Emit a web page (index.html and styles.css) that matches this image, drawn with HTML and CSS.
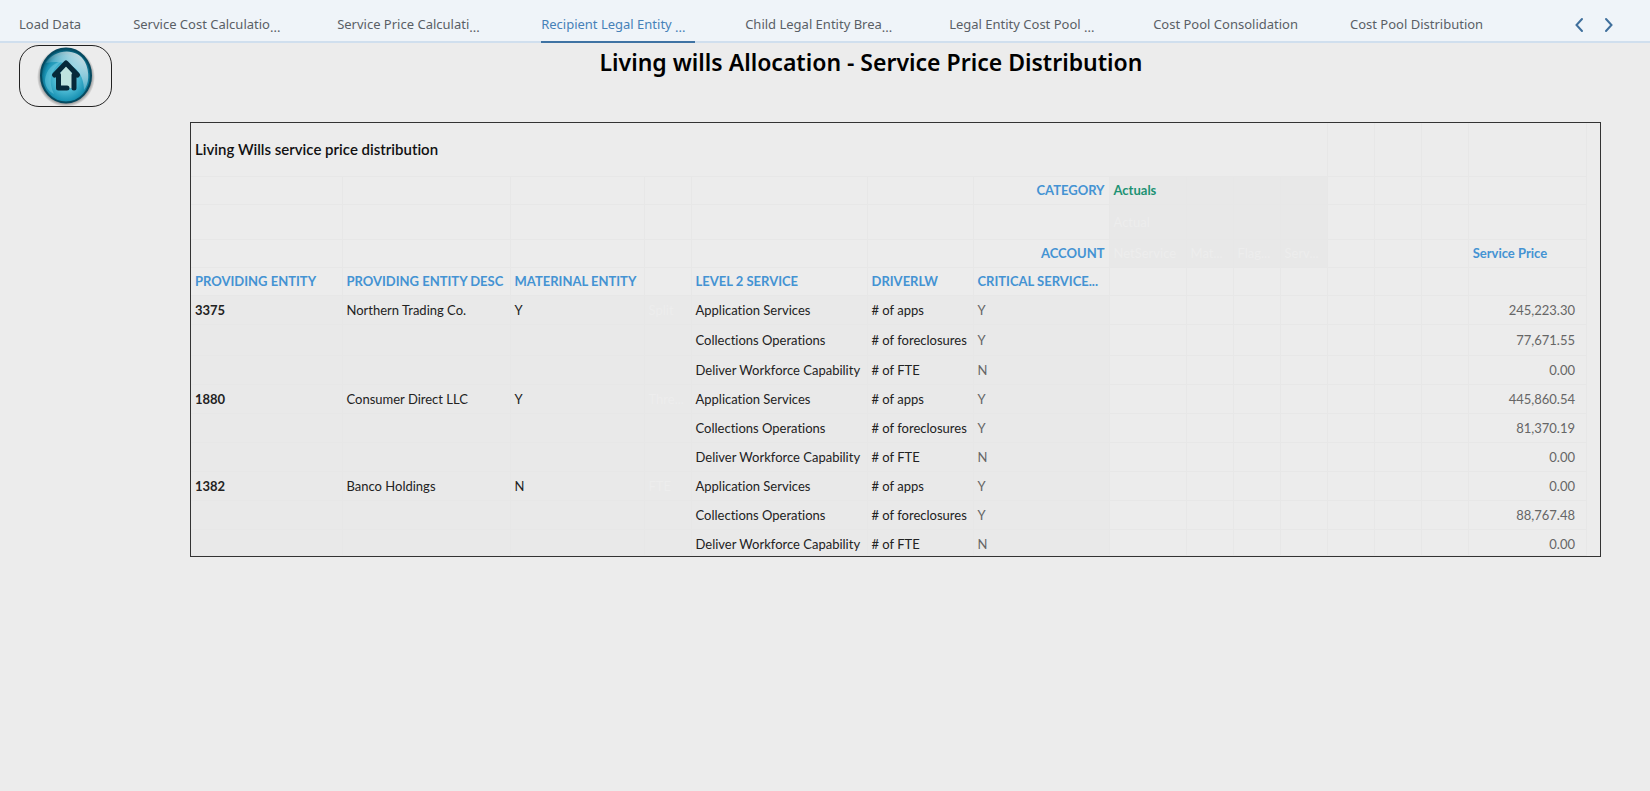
FILE: index.html
```html
<!DOCTYPE html>
<html lang="en">
<head>
<meta charset="utf-8">
<title>Living wills Allocation - Service Price Distribution</title>
<link rel="stylesheet" href="styles.css">
</head>
<body>
<header class="tabbar">
  <nav class="tabs" aria-label="Pages">
    <a class="tab" href="#load">Load Data</a>
    <a class="tab tab-cut" href="#cost">Service Cost Calculatio<span class="dots">...</span></a>
    <a class="tab tab-cut" href="#price">Service Price Calculati<span class="dots">...</span></a>
    <a class="tab tab-cut tab-active" href="#recipient" aria-current="page">Recipient Legal Entity <span class="dots">...</span></a>
    <a class="tab tab-cut" href="#child">Child Legal Entity Brea<span class="dots">...</span></a>
    <a class="tab tab-cut" href="#legal">Legal Entity Cost Pool <span class="dots">...</span></a>
    <a class="tab" href="#consolidation">Cost Pool Consolidation</a>
    <a class="tab" href="#distribution">Cost Pool Distribution</a>
  </nav>
  <div class="pager">
    <button class="arrow" type="button" aria-label="Previous tabs"><svg width="10" height="16" viewBox="0 0 10 16"><path d="M8 2 2.500 8 8 14"/></svg></button>
    <button class="arrow" type="button" aria-label="Next tabs"><svg width="10" height="16" viewBox="0 0 10 16"><path d="M2 2 7.500 8 2 14"/></svg></button>
  </div>
</header>
<main class="page">
  <div class="top">
    <button class="home" type="button" aria-label="Home">
      <svg width="58" height="60" viewBox="0 0 58 60">
        <defs>
          <radialGradient id="ball" cx="50%" cy="55%" r="52%">
            <stop offset="0" stop-color="#8fd2e2"/>
            <stop offset=".5" stop-color="#45b4cf"/>
            <stop offset=".8" stop-color="#1a93b4"/>
            <stop offset="1" stop-color="#055a74"/>
          </radialGradient>
          <linearGradient id="shine" x1="1" y1="0" x2="0" y2="1">
            <stop offset="0" stop-color="#fff" stop-opacity=".95"/>
            <stop offset=".6" stop-color="#fff" stop-opacity=".15"/>
          </linearGradient>
          <radialGradient id="shade"><stop offset=".84" stop-color="#333" stop-opacity=".6"/><stop offset="1" stop-color="#333" stop-opacity="0"/></radialGradient>
        </defs>
        <ellipse cx="29" cy="31" rx="29" ry="30" fill="url(#shade)"/>
        <ellipse cx="29" cy="29.500" rx="25" ry="27" fill="url(#ball)" stroke="#064a60" stroke-width="2"/>
        <path d="M9 17C17 3 40 1 48 16C53 26 52 38 47 44C47 28 37 12 9 17Z" fill="url(#shine)"/>
        <path d="M8 34C9 24 16 17 25 15C13 24 11 36 17 48C11 45 8 40 8 34Z" fill="#7fd6ea" opacity=".4"/>
        <path d="M21 30 29 19 37 30V42H22Z" fill="#bfe3df"/>
        <path d="M17.500 29 29 17 40.500 29M21.500 29V42H30M37 29V42" fill="none" stroke="#06293a" stroke-width="5" stroke-linecap="round" stroke-linejoin="round"/>
      </svg>
    </button>
    <h1 class="title">Living wills Allocation - Service Price Distribution</h1>
  </div>
  <section class="panel">
    <table class="grid">
      <colgroup><col class="c-entity"><col class="c-desc"><col class="c-mat"><col class="c-small"><col class="c-level"><col class="c-driver"><col class="c-crit"><col class="c-first"><col class="c-small"><col class="c-small"><col class="c-small"><col class="c-small"><col class="c-small"><col class="c-small"><col class="c-price"></colgroup>
      <thead>
        <tr class="r-title"><th colspan="11" scope="colgroup">Living Wills service price distribution</th><td></td><td></td><td></td><td></td></tr>
        <tr><td></td><td></td><td></td><td></td><td></td><td></td><th class="label end" scope="row">CATEGORY</th><td class="tint actuals">Actuals</td><td class="tint"></td><td class="tint"></td><td class="tint"></td><td></td><td></td><td></td><td></td></tr>
        <tr class="r-mid"><td></td><td></td><td></td><td></td><td></td><td></td><td></td><td class="tint ghost">Actual</td><td class="tint"></td><td class="tint"></td><td class="tint"></td><td></td><td></td><td></td><td></td></tr>
        <tr><td></td><td></td><td></td><td></td><td></td><td></td><th class="label end" scope="row">ACCOUNT</th><td class="tint ghost">NetService</td><td class="tint ghost">Mat...</td><td class="tint ghost">Flag...</td><td class="tint ghost">Serv...</td><td></td><td></td><td></td><th class="label" scope="col">Service Price</th></tr>
        <tr><th class="label" scope="col">PROVIDING ENTITY</th><th class="label" scope="col">PROVIDING ENTITY DESC</th><th class="label" scope="col">MATERINAL ENTITY</th><td></td><th class="label" scope="col">LEVEL 2 SERVICE</th><th class="label" scope="col">DRIVERLW</th><th class="label" scope="col">CRITICAL SERVICE...</th><td></td><td></td><td></td><td></td><td></td><td></td><td></td><td></td></tr>
      </thead>
      <tbody>
        <tr><th scope="row">3375</th><td>Northern Trading Co.</td><td>Y</td><td class="ghost">Split</td><td>Application Services</td><td># of apps</td><td>Y</td><td></td><td></td><td></td><td></td><td></td><td></td><td></td><td>245,223.30</td></tr>
        <tr class="r-tall"><th></th><td></td><td></td><td></td><td>Collections Operations</td><td># of foreclosures</td><td>Y</td><td></td><td></td><td></td><td></td><td></td><td></td><td></td><td>77,671.55</td></tr>
        <tr><th></th><td></td><td></td><td></td><td>Deliver Workforce Capability</td><td># of FTE</td><td>N</td><td></td><td></td><td></td><td></td><td></td><td></td><td></td><td>0.00</td></tr>
        <tr><th scope="row">1880</th><td>Consumer Direct LLC</td><td>Y</td><td class="ghost">Thre...</td><td>Application Services</td><td># of apps</td><td>Y</td><td></td><td></td><td></td><td></td><td></td><td></td><td></td><td>445,860.54</td></tr>
        <tr><th></th><td></td><td></td><td></td><td>Collections Operations</td><td># of foreclosures</td><td>Y</td><td></td><td></td><td></td><td></td><td></td><td></td><td></td><td>81,370.19</td></tr>
        <tr><th></th><td></td><td></td><td></td><td>Deliver Workforce Capability</td><td># of FTE</td><td>N</td><td></td><td></td><td></td><td></td><td></td><td></td><td></td><td>0.00</td></tr>
        <tr><th scope="row">1382</th><td>Banco Holdings</td><td>N</td><td class="ghost">FTE</td><td>Application Services</td><td># of apps</td><td>Y</td><td></td><td></td><td></td><td></td><td></td><td></td><td></td><td>0.00</td></tr>
        <tr><th></th><td></td><td></td><td></td><td>Collections Operations</td><td># of foreclosures</td><td>Y</td><td></td><td></td><td></td><td></td><td></td><td></td><td></td><td>88,767.48</td></tr>
        <tr class="r-last"><th></th><td></td><td></td><td></td><td>Deliver Workforce Capability</td><td># of FTE</td><td>N</td><td></td><td></td><td></td><td></td><td></td><td></td><td></td><td>0.00</td></tr>
      </tbody>
    </table>
  </section>
</main>
</body>
</html>
```
FILE: styles.css
```css
* { box-sizing: border-box; }

body {
  margin: 0;
  min-height: 100vh;
  background: #ececec;
  color: #222;
  font-family: "Noto Sans", "Open Sans", sans-serif;
}

.tabbar {
  display: flex;
  justify-content: space-between;
  height: 43px;
  padding: 0 31px 0 19px;
  background: #eff4f9;
  border-bottom: 2px solid #d0dfee;
}

.tabs { display: flex; gap: 50px; }

.tab {
  display: block;
  height: 43px;
  padding-right: 2px;
  border-bottom: 2px solid transparent;
  color: #5a5f66;
  font-size: 13px;
  line-height: 48px;
  text-decoration: none;
  white-space: pre;
}

.tab-cut { width: 154px; padding-right: 0; }
.tab-active { color: #4681b8; border-bottom-color: #3f73a3; }
.dots { position: relative; top: 3px; }

.pager { display: flex; align-items: center; gap: 10px; padding-top: 8px; }

.arrow {
  display: flex;
  align-items: center;
  justify-content: center;
  width: 20px;
  height: 24px;
  padding: 0;
  border: 0;
  background: none;
}

.arrow path { fill: none; stroke: #3f6f9c; stroke-width: 2; stroke-linecap: round; }

.top {
  display: grid;
  grid-template-columns: 93px 1fr 0;
  align-items: start;
  padding: 2px 0 0 19px;
}

.home {
  display: flex;
  align-items: center;
  justify-content: center;
  width: 93px;
  height: 62px;
  padding: 0;
  border: 1px solid #222;
  border-radius: 20px;
  background: none;
}

.title {
  margin: 0;
  padding-right: 20px;
  color: #000;
  font-size: 23px;
  font-weight: 600;
  line-height: 34px;
  text-align: center;
}

.panel {
  margin: 15px 49px 0 190px;
  padding-right: 13px;
  overflow: hidden;
  border: 1px solid #333;
}

.grid {
  width: 100%;
  border-collapse: collapse;
  table-layout: fixed;
  font-family: Lato, sans-serif;
  font-size: 13px;
  font-variant-ligatures: none;
  line-height: 18px;
}

.c-entity { width: 151px; }
.c-desc { width: 168px; }
.c-mat { width: 134px; }
.c-small { width: 47px; }
.c-level { width: 176px; }
.c-driver { width: 106px; }
.c-crit { width: 136px; }
.c-first { width: 77px; }

.grid tr { height: 28px; }
.grid tbody tr { height: 29px; }
.grid .r-title { height: 53px; }
.grid .r-mid { height: 35px; }
.grid tbody .r-tall { height: 31px; }
.grid tbody .r-last { height: 26px; }

.grid th,
.grid td {
  padding: 0 4px;
  border: 1px solid #e7e7e7;
  border-top: 0;
  border-left: 0;
  overflow: hidden;
  text-align: left;
  white-space: nowrap;
}

.grid th { font-weight: 700; }
.grid .r-title th { color: #111; font-size: 15px; font-weight: 600; }
.grid .label { color: #4493d3; }
.grid .end { text-align: right; }
.grid .tint { background: #e8e8e8; }
.grid .actuals { color: #1d9273; font-weight: 700; }
.grid .ghost { color: #ededed; }
.grid .r-last td { padding-top: 4px; }

.grid tbody th,
.grid tbody td:nth-child(-n+7) { background: #e9e9e9; }
.grid tbody td:nth-child(7) { color: #666; }
.grid tbody td:last-child { padding-right: 11px; color: #666; text-align: right; }
```
